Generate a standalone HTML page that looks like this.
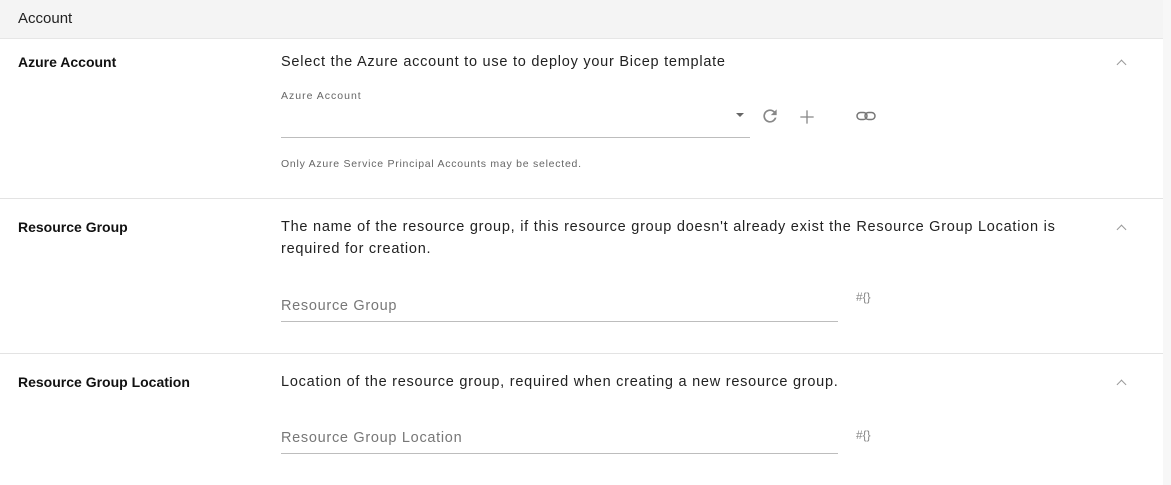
<!DOCTYPE html>
<html><head><style>
body{margin:0;width:1171px;height:485px;overflow:hidden;background:#fff;font-family:"Liberation Sans",Roboto,sans-serif;color:#222;position:relative}
.a{position:absolute;white-space:nowrap}
.hdr{position:absolute;left:0;top:0;width:1163px;height:38px;background:#f4f4f4;border-bottom:1px solid #e6e6e6}
.sb{position:absolute;left:1163px;top:0;width:8px;height:485px;background:#f7f7f7}
.lbl{font-weight:bold;font-size:14px;color:#111}
.desc{font-size:14.5px;color:#222;line-height:22px;letter-spacing:0.75px}
.line{position:absolute;height:1px;background:#bdbdbd}
.sep{position:absolute;left:0;width:1163px;height:1px;background:#e3e3e3}
.chev{position:absolute;width:6px;height:6px;border-left:1.3px solid #999;border-top:1.3px solid #999;transform:rotate(45deg)}
.ph{font-size:14.5px;color:#777;letter-spacing:0.7px}
.hash{font-size:12px;color:#888}
</style></head><body>
<div class="hdr"></div><div class="sb"></div>
<div class="a" style="left:18px;top:10px;font-size:15px;color:#222">Account</div>

<div class="a lbl" style="left:18px;top:54px">Azure Account</div>
<div class="a desc" style="left:281px;top:51px">Select the Azure account to use to deploy your Bicep template</div>
<div class="chev" style="left:1118px;top:61px"></div>
<div class="a" style="left:281px;top:90px;font-size:10.5px;color:#666;letter-spacing:1px">Azure Account</div>
<div class="line" style="left:281px;top:137px;width:469px"></div>
<div class="a" style="left:736px;top:113px;width:0;height:0;border-left:4px solid transparent;border-right:4px solid transparent;border-top:4px solid #666"></div>
<svg class="a" style="left:760px;top:106px" width="20" height="20" viewBox="0 0 24 24"><path fill="#888" d="M17.65 6.35A7.958 7.958 0 0 0 12 4a8 8 0 1 0 7.73 10h-2.08A6 6 0 1 1 12 6c1.66 0 3.14.69 4.22 1.78L13 11h7V4l-2.35 2.35z"/></svg>
<svg class="a" style="left:797px;top:107px" width="20" height="20" viewBox="0 0 24 24"><path stroke="#888" stroke-width="1.6" d="M12 4v16M4 12h16"/></svg>
<svg class="a" style="left:856px;top:111px" width="20" height="10" viewBox="0 0 20 10"><rect x="1" y="1.5" width="10" height="7" rx="3.5" fill="none" stroke="#777" stroke-width="1.5"/><rect x="9" y="1.5" width="10" height="7" rx="3.5" fill="none" stroke="#777" stroke-width="1.5"/></svg>
<div class="a" style="left:281px;top:158px;font-size:10.5px;color:#666;letter-spacing:0.75px">Only Azure Service Principal Accounts may be selected.</div>
<div class="sep" style="top:198px"></div>

<div class="a lbl" style="left:18px;top:219px">Resource Group</div>
<div class="a desc" style="left:281px;top:216px">The name of the resource group, if this resource group doesn't already exist the Resource Group Location is<br>required for creation.</div>
<div class="chev" style="left:1118px;top:226px"></div>
<div class="a ph" style="left:281px;top:298px">Resource Group</div>
<div class="line" style="left:281px;top:321px;width:557px"></div>
<div class="a hash" style="left:856px;top:290px">#{}</div>
<div class="sep" style="top:353px"></div>

<div class="a lbl" style="left:18px;top:374px">Resource Group Location</div>
<div class="a desc" style="left:281px;top:371px">Location of the resource group, required when creating a new resource group.</div>
<div class="chev" style="left:1118px;top:381px"></div>
<div class="a ph" style="left:281px;top:430px">Resource Group Location</div>
<div class="line" style="left:281px;top:453px;width:557px"></div>
<div class="a hash" style="left:856px;top:428px">#{}</div>
</body></html>
